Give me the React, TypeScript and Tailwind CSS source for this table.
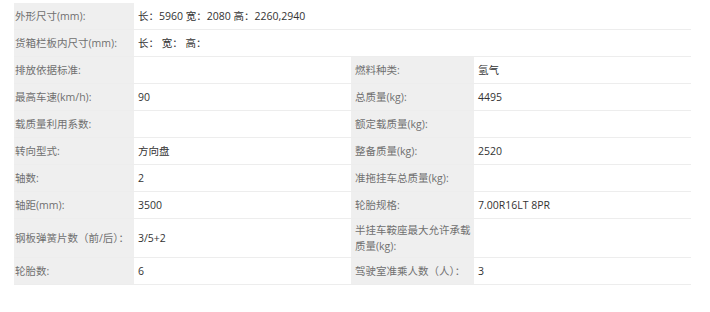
import { FC } from "react";

type Row = {
  label: string;
  value: string;
  label2?: string;
  value2?: string;
  wide?: boolean;
};

const rows: Row[] = [
  { label: "外形尺寸(mm):", value: "长：5960 宽：2080 高：2260,2940", wide: true },
  { label: "货箱栏板内尺寸(mm):", value: "长：  宽：  高：", wide: true },
  { label: "排放依据标准:", value: "", label2: "燃料种类:", value2: "氢气" },
  { label: "最高车速(km/h):", value: "90", label2: "总质量(kg):", value2: "4495" },
  { label: "载质量利用系数:", value: "", label2: "额定载质量(kg):", value2: "" },
  { label: "转向型式:", value: "方向盘", label2: "整备质量(kg):", value2: "2520" },
  { label: "轴数:", value: "2", label2: "准拖挂车总质量(kg):", value2: "" },
  { label: "轴距(mm):", value: "3500", label2: "轮胎规格:", value2: "7.00R16LT 8PR" },
  {
    label: "钢板弹簧片数（前/后）：",
    value: "3/5+2",
    label2: "半挂车鞍座最大允许承载质量(kg):",
    value2: "",
  },
  { label: "轮胎数:", value: "6", label2: "驾驶室准乘人数（人）：", value2: "3" },
];

const cell =
  "min-h-[27px] flex items-center border-b border-[#ededed] py-[3px] leading-[16px]";

const App: FC = () => {
  return (
    <div
      className="w-[710px] h-[312px] bg-white pt-[3px] pl-[14px] text-[10.5px]"
      style={{ fontFamily: '"Open Sans", "Noto Sans CJK SC", sans-serif' }}
    >
      <div className="grid grid-cols-[120px_217px_123px_217px] w-[677px]">
        {rows.map((r) => (
          <div key={r.label} className="contents">
            {/* left label */}
            <div className={`${cell} bg-[#efefef] text-[#707070] pl-[1px] pr-1`}>
              {r.label}
            </div>

            {r.wide ? (
              <div className={`${cell} col-span-3 text-[#333] pl-1`}>
                {r.value}
              </div>
            ) : (
              <>
                <div className={`${cell} text-[#333] pl-1`}>{r.value}</div>
                <div className={`${cell} bg-[#efefef] text-[#707070] pl-1 pr-[2px]`}>
                  {r.label2}
                </div>
                <div className={`${cell} text-[#333] pl-1`}>{r.value2}</div>
              </>
            )}
          </div>
        ))}
      </div>
    </div>
  );
};

export default App;
